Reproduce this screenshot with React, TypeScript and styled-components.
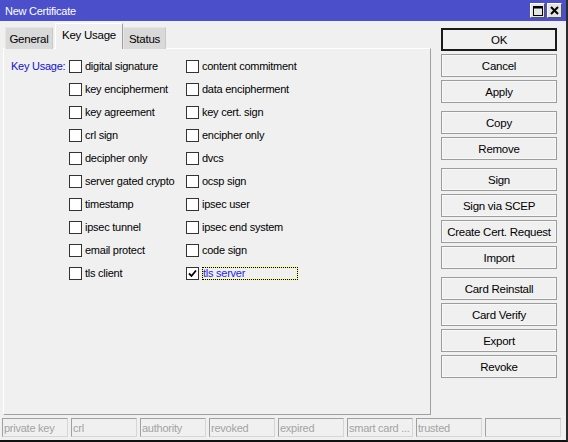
import React from "react";
import styled, { createGlobalStyle } from "styled-components";

const Global = createGlobalStyle`
  html, body { margin: 0; padding: 0; background: #f0f0f0; }
  body { font-family: "Liberation Sans", Arial, sans-serif; font-size: 11px; letter-spacing: -0.25px; color: #000; }
  * { box-sizing: border-box; }
`;

const Window = styled.div`
  width: 568px;
  height: 442px;
  display: flex;
  flex-direction: column;
  background: #f0f0f0;
  border-right: 2px solid #2b2b2b;
  border-bottom: 2px solid #111;
  overflow: hidden;
`;

const TitleBar = styled.div`
  height: 21px;
  flex: none;
  background: #4b4fc9;
  color: #fff;
  display: flex;
  align-items: center;
  padding: 0 4px 0 5px;
  font-size: 11px;
`;

const TitleText = styled.div`
  flex: 1;
`;

const TitleButtons = styled.div`
  display: flex;
  gap: 2px;
`;

const TitleButton = styled.div`
  width: 15px;
  height: 15px;
  background: #e4e4e4;
  border: 1px solid #fff;
  border-right-color: #555;
  border-bottom-color: #555;
  display: flex;
  align-items: center;
  justify-content: center;
`;

const Main = styled.div`
  flex: 1;
  display: flex;
  min-height: 0;
`;

const LeftArea = styled.div`
  width: 431px;
  padding: 3px 0 0 3px;
  display: flex;
  flex-direction: column;
`;

const TabRow = styled.div`
  display: flex;
  align-items: flex-end;
  height: 25px;
  padding-left: 2px;
  margin-bottom: -1px;
  position: relative;
  z-index: 1;
`;

const Tab = styled.div<{ $active?: boolean; $w: number; $ml?: number }>`
  width: ${(p) => p.$w}px;
  margin-left: ${(p) => p.$ml ?? 0}px;
  height: ${(p) => (p.$active ? 26 : 22)}px;
  background: ${(p) => (p.$active ? "#f0f0f0" : "#d9d9d9")};
  border: 1px solid ${(p) => (p.$active ? "#fff" : "#e6e6e6")};
  border-right-color: ${(p) => (p.$active ? "#a0a0a0" : "#c8c8c8")};
  border-bottom: none;
  display: flex;
  align-items: center;
  justify-content: center;
  padding-bottom: ${(p) => (p.$active ? 3 : 0)}px;
  font-size: 11.5px;
  color: #000;
`;

const Panel = styled.div`
  flex: 1;
  border: 1px solid #fff;
  border-right-color: #a0a0a0;
  border-bottom-color: #a0a0a0;
  padding: 11px 0 0 7px;
  margin-bottom: 1px;
`;

const Grid = styled.div`
  display: grid;
  grid-template-columns: 58px 117px 160px;
  grid-auto-rows: 23px;
  align-items: start;
`;

const FieldLabel = styled.div`
  color: #1010d0;
  line-height: 13px;
`;

const Check = styled.div`
  display: flex;
  align-items: center;
  gap: 3px;
  height: 13px;
`;

const Box = styled.div`
  width: 13px;
  height: 13px;
  background: #fff;
  border: 1px solid #333;
  flex: none;
  display: flex;
  align-items: center;
  justify-content: center;
`;

const CheckText = styled.span<{ $focus?: boolean }>`
  line-height: 11px;
  white-space: nowrap;
  ${(p) =>
    p.$focus
      ? `
    color: #1c1cf0;
    width: 96px;
    height: 13px;
    border: 1px dotted #000;
    background: linear-gradient(#f0f0f0, #f0f0f0) padding-box, #ffff00 border-box;
  `
      : ""}
`;

const ButtonColumn = styled.div`
  width: 116px;
  margin-left: 10px;
  padding-top: 7px;
  display: flex;
  flex-direction: column;
`;

const ButtonGroup = styled.div`
  display: flex;
  flex-direction: column;
  gap: 3px;
  & + & {
    margin-top: 8px;
  }
`;

const Button = styled.div<{ $default?: boolean }>`
  height: 23px;
  background: #f0f0f0;
  border: ${(p) => (p.$default ? "2px solid #1a1a1a" : "1px solid #9c9c9c")};
  box-shadow: ${(p) => (p.$default ? "none" : "inset 0 0 0 1px #f8f8f8")};
  display: flex;
  align-items: center;
  justify-content: center;
  font-size: 11.5px;
  color: #000;
`;

const StatusBar = styled.div`
  height: 24px;
  flex: none;
  display: flex;
  gap: 3px;
  padding: 2px 0 0 2px;
`;

const StatusCell = styled.div<{ $w: number }>`
  width: ${(p) => p.$w}px;
  height: 19px;
  border: 1px solid #a0a0a0;
  border-right-color: #d6d6d6;
  border-bottom-color: #d6d6d6;
  color: #a3a3a3;
  padding-left: 1px;
  display: flex;
  align-items: center;
  font-size: 11px;
  white-space: nowrap;
  overflow: hidden;
`;

const col1 = [
  "digital signature",
  "key encipherment",
  "key agreement",
  "crl sign",
  "decipher only",
  "server gated crypto",
  "timestamp",
  "ipsec tunnel",
  "email protect",
  "tls client",
];
const col2 = [
  "content commitment",
  "data encipherment",
  "key cert. sign",
  "encipher only",
  "dvcs",
  "ocsp sign",
  "ipsec user",
  "ipsec end system",
  "code sign",
  "tls server",
];

const groups: string[][] = [
  ["OK", "Cancel", "Apply"],
  ["Copy", "Remove"],
  ["Sign", "Sign via SCEP", "Create Cert. Request", "Import"],
  ["Card Reinstall", "Card Verify", "Export", "Revoke"],
];

const status: [string, number][] = [
  ["private key", 66],
  ["crl", 66],
  ["authority", 66],
  ["revoked", 66],
  ["expired", 66],
  ["smart card ...", 66],
  ["trusted", 66],
  ["", 76],
];

const CheckMark = () => (
  <svg width="9" height="9" viewBox="0 0 9 9">
    <path d="M1 4.5 L3.5 7 L8 1.5" fill="none" stroke="#000" strokeWidth="1.8" />
  </svg>
);

const CheckItem = ({ label, checked }: { label: string; checked?: boolean }) => (
  <Check>
    <Box>{checked ? <CheckMark /> : null}</Box>
    <CheckText $focus={checked}>{label}</CheckText>
  </Check>
);

export default function App() {
  return (
    <>
      <Global />
      <Window>
        <TitleBar>
          <TitleText>New Certificate</TitleText>
          <TitleButtons>
            <TitleButton>
              <svg width="10" height="10" viewBox="0 0 10 10">
                <rect x="0.5" y="0.5" width="9" height="9" fill="none" stroke="#000" />
                <rect x="0.5" y="0.5" width="9" height="2" fill="#000" />
              </svg>
            </TitleButton>
            <TitleButton>
              <svg width="9" height="9" viewBox="0 0 9 9">
                <path d="M1 1 L8 8 M8 1 L1 8" stroke="#000" strokeWidth="2" />
              </svg>
            </TitleButton>
          </TitleButtons>
        </TitleBar>
        <Main>
          <LeftArea>
            <TabRow>
              <Tab $w={48}>General</Tab>
              <Tab $w={68} $ml={2} $active>
                Key Usage
              </Tab>
              <Tab $w={43}>Status</Tab>
            </TabRow>
            <Panel>
              <Grid>
                {col1.map((c, i) => (
                  <React.Fragment key={c}>
                    {i === 0 ? <FieldLabel>Key Usage:</FieldLabel> : <div />}
                    <CheckItem label={c} />
                    <CheckItem label={col2[i]} checked={col2[i] === "tls server"} />
                  </React.Fragment>
                ))}
              </Grid>
            </Panel>
          </LeftArea>
          <ButtonColumn>
            {groups.map((g, gi) => (
              <ButtonGroup key={gi}>
                {g.map((b) => (
                  <Button key={b} $default={b === "OK"}>
                    {b}
                  </Button>
                ))}
              </ButtonGroup>
            ))}
          </ButtonColumn>
        </Main>
        <StatusBar>
          {status.map(([s, w], i) => (
            <StatusCell key={i} $w={w}>
              {s}
            </StatusCell>
          ))}
        </StatusBar>
      </Window>
    </>
  );
}
